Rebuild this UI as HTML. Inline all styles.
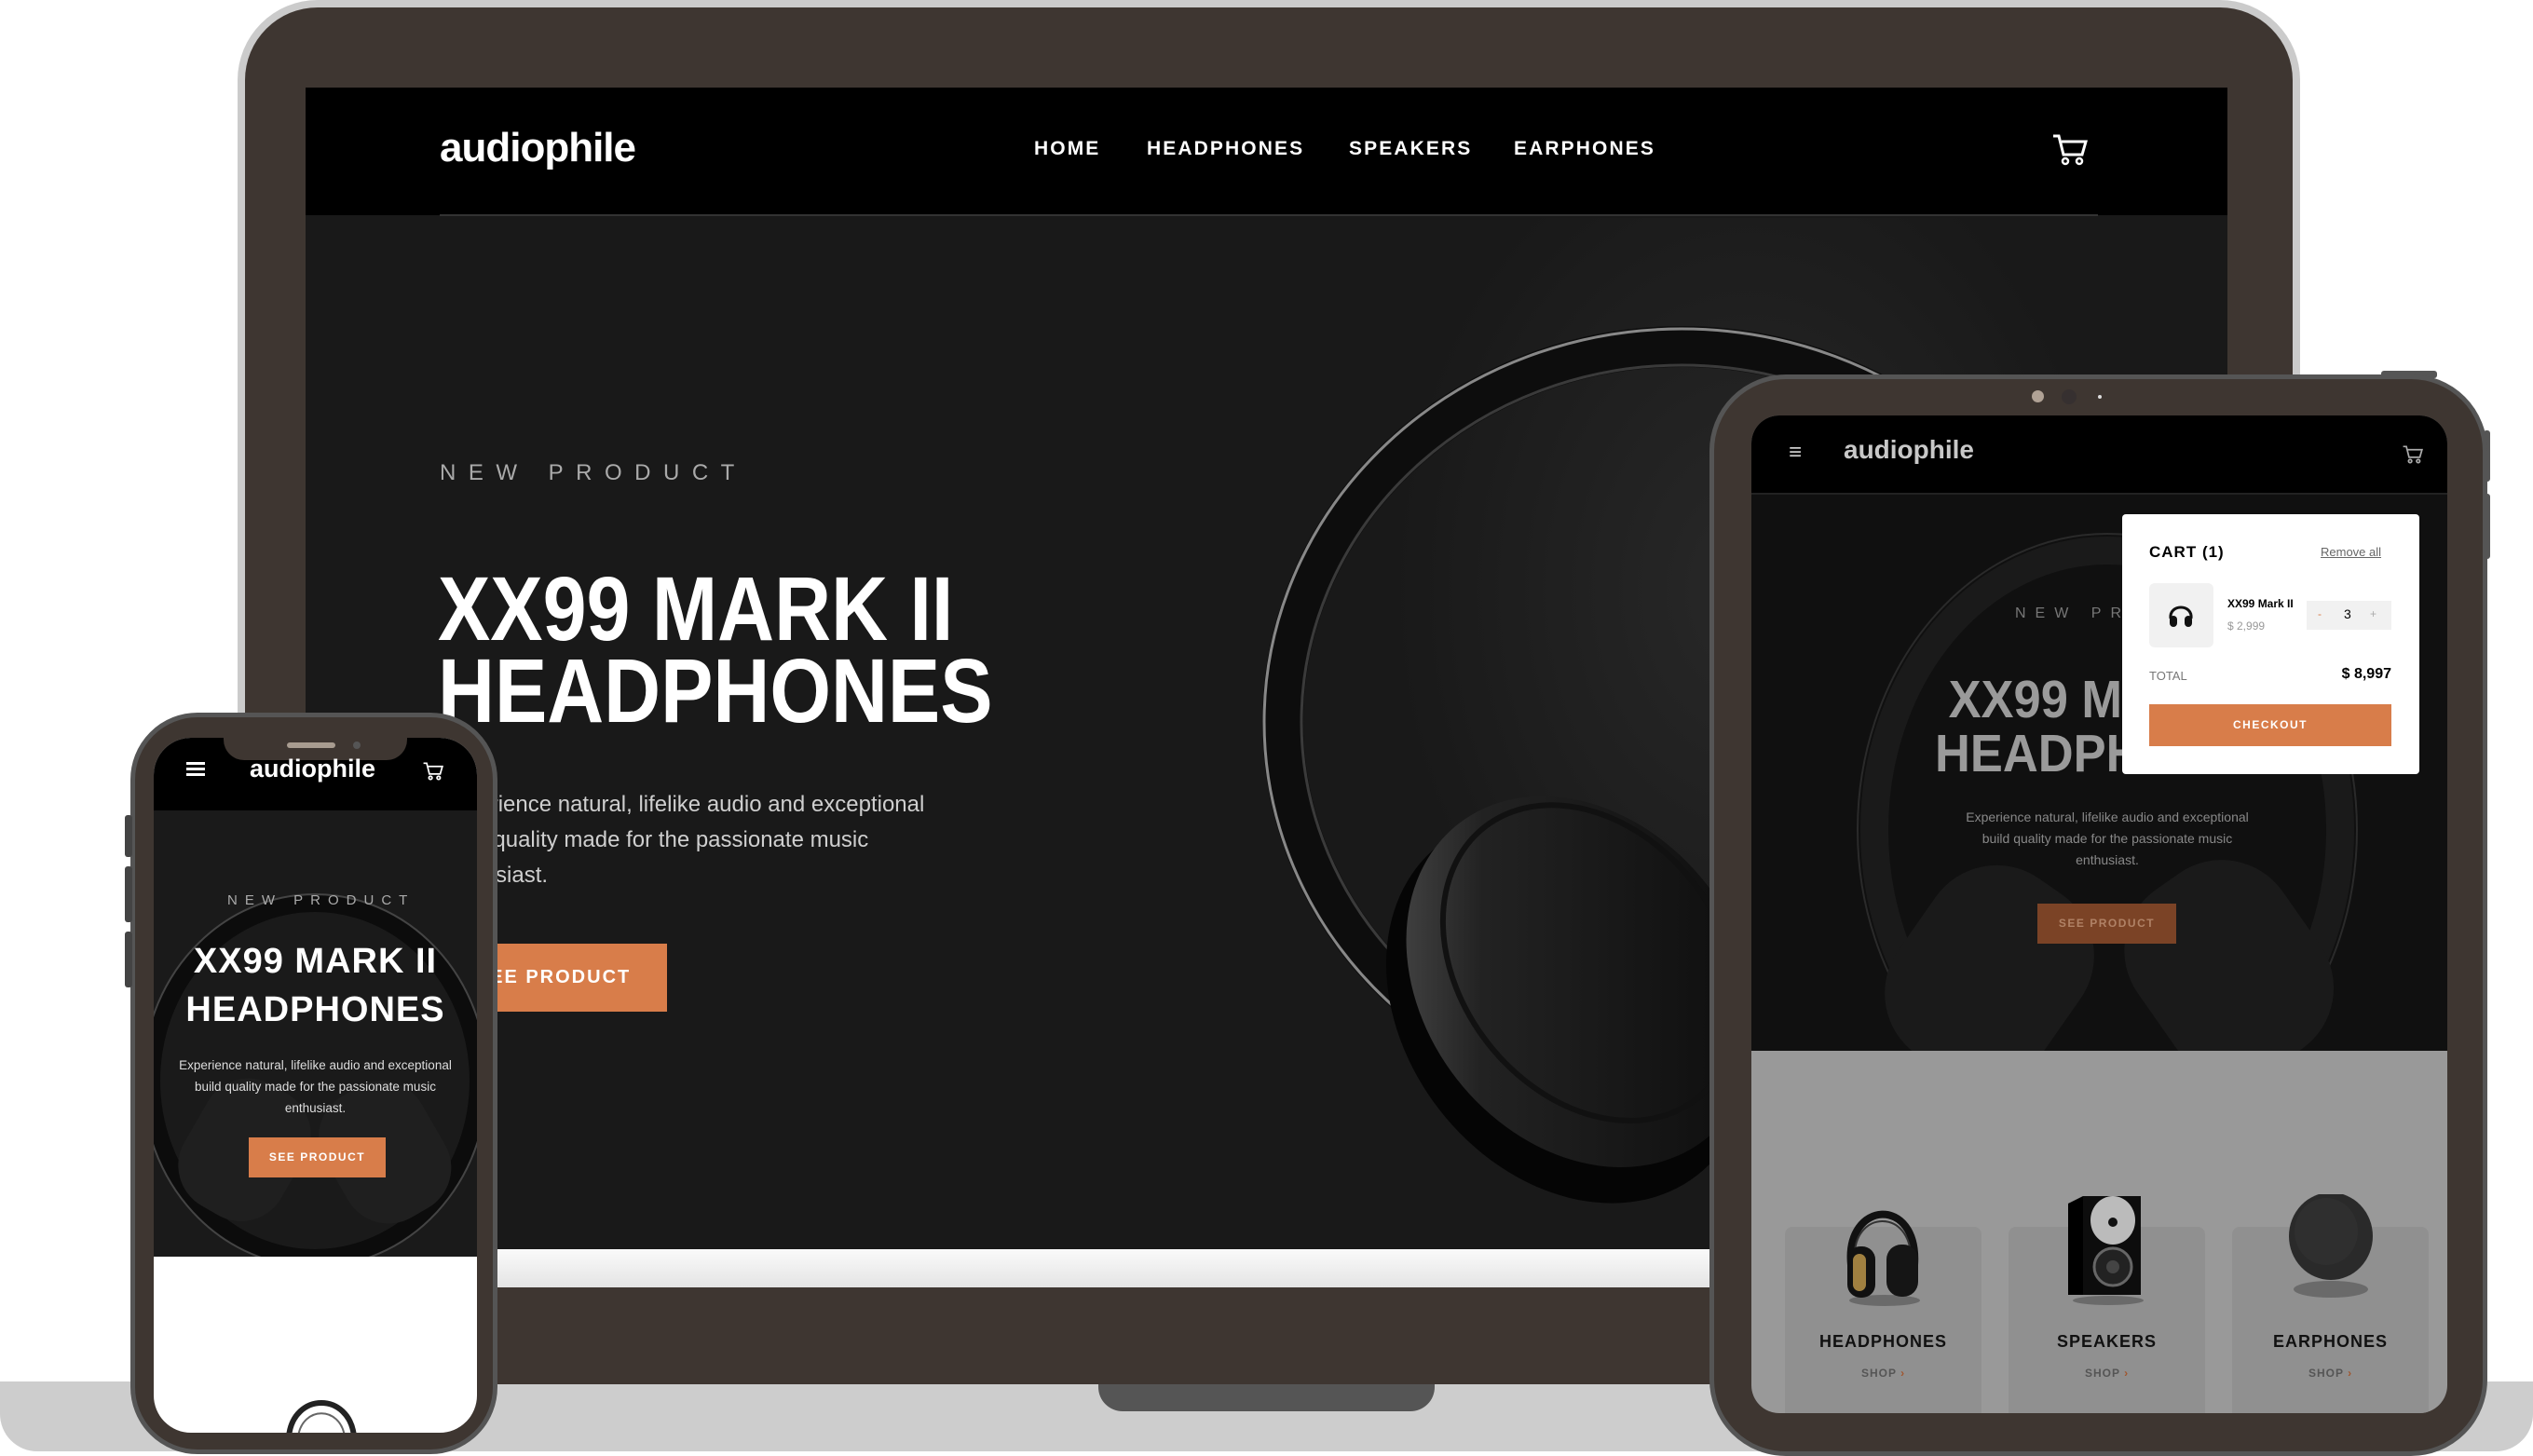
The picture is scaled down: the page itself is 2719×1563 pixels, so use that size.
<!DOCTYPE html>
<html><head><meta charset="utf-8">
<style>
*{margin:0;padding:0;box-sizing:border-box}
html,body{width:2719px;height:1563px;overflow:hidden;background:#fff;font-family:"Liberation Sans",Arial,sans-serif}
.a{position:absolute}
.t{position:absolute;white-space:nowrap}
</style></head><body>

<!-- Laptop base -->
<div class="a" style="left:0;top:1483px;width:2719px;height:75px;background:#cdcdcd;border-radius:0 0 40px 40px"></div>
<div class="a" style="left:1179px;top:1483px;width:361px;height:32px;background:#555;border-radius:0 0 26px 26px"></div>

<!-- Laptop lid -->
<div class="a" style="left:255px;top:0;width:2214px;height:1486px;background:#3e3631;border:8px solid #cbcbcb;border-bottom:none;border-radius:86px 86px 0 0"></div>
<!-- screen -->
<div class="a" style="left:328px;top:94px;width:2063px;height:1288px;background:#191919;overflow:hidden">
  <div class="a" style="left:0;top:0;width:2063px;height:137px;background:#000"></div>
  <div class="a" style="left:144px;top:136px;width:1780px;height:2px;background:#333"></div>
  <div class="a" style="left:0;top:1247px;width:2063px;height:41px;background:linear-gradient(#fafafa,#e4e4e4)"></div>
  <div class="a" style="left:1100px;top:140px;width:900px;height:1000px;background:radial-gradient(ellipse at 50% 40%,rgba(55,55,55,.5),rgba(25,25,25,0) 60%)"></div>
</div>
<div class="t" style="left:472px;top:134px;font-size:44px;font-weight:bold;color:#fff;letter-spacing:-1px">audiophile</div>
<div class="t" style="left:1110px;top:148px;font-size:21px;font-weight:bold;color:#fff;letter-spacing:2.1px">HOME</div>
<div class="t" style="left:1231px;top:148px;font-size:21px;font-weight:bold;color:#fff;letter-spacing:2.1px">HEADPHONES</div>
<div class="t" style="left:1448px;top:148px;font-size:21px;font-weight:bold;color:#fff;letter-spacing:2.1px">SPEAKERS</div>
<div class="t" style="left:1625px;top:148px;font-size:21px;font-weight:bold;color:#fff;letter-spacing:2.1px">EARPHONES</div>
<svg class="a" style="left:2203px;top:144px" width="38" height="34" viewBox="0 0 38 34"><path d="M1 2h6l5 20h20l4-14H10" fill="none" stroke="#fff" stroke-width="3"/><circle cx="14" cy="29" r="3" fill="none" stroke="#fff" stroke-width="2.5"/><circle cx="29" cy="29" r="3" fill="none" stroke="#fff" stroke-width="2.5"/></svg>

<!-- big headphone art -->
<svg class="a" style="left:0;top:0" width="2719" height="1563" viewBox="0 0 2719 1563">
<defs>
<clipPath id="ls"><rect x="328" y="231" width="2063" height="1110"/></clipPath>
<linearGradient id="cup" x1="0" y1="0" x2="1" y2="1"><stop offset="0" stop-color="#5a5a5a"/><stop offset=".3" stop-color="#222"/><stop offset="1" stop-color="#080808"/></linearGradient>
</defs>
<g clip-path="url(#ls)">
<ellipse cx="1805" cy="775" rx="428" ry="403" fill="none" stroke="#0d0d0d" stroke-width="44"/>
<ellipse cx="1805" cy="775" rx="448" ry="422" fill="none" stroke="#888" stroke-width="3"/>
<ellipse cx="1805" cy="775" rx="408" ry="383" fill="none" stroke="#3a3a3a" stroke-width="3"/>
<g transform="rotate(-38 1690 1060)">
<ellipse cx="1670" cy="1075" rx="175" ry="225" fill="#050505"/>
<ellipse cx="1700" cy="1060" rx="170" ry="215" fill="url(#cup)"/>
<ellipse cx="1720" cy="1050" rx="140" ry="185" fill="none" stroke="#111" stroke-width="6"/>
</g>
</g>
</svg>

<div class="t" style="left:472px;top:494px;font-size:24px;color:#aaa;letter-spacing:13.5px">NEW PRODUCT</div>
<div class="t" style="left:470px;top:610px;font-size:97px;font-weight:bold;color:#fff;line-height:88px;transform:scaleX(.87);transform-origin:0 0">XX99 MARK II<br>HEADPHONES</div>
<div class="t" style="left:472px;top:845px;font-size:24px;color:#cfcfcf;line-height:38px">Experience natural, lifelike audio and exceptional<br>build quality made for the passionate music<br>enthusiast.</div>
<div class="a" style="left:472px;top:1013px;width:244px;height:73px;background:#d87d4a;color:#fff;font-size:20px;font-weight:bold;letter-spacing:2px;text-align:center;line-height:73px">SEE PRODUCT</div>

<!-- Phone -->
<div class="a" style="left:140px;top:765px;width:394px;height:796px;background:#3e3631;border:5px solid #555;border-radius:72px"></div>
<div class="a" style="left:134px;top:875px;width:8px;height:45px;background:#444;border-radius:3px"></div>
<div class="a" style="left:134px;top:930px;width:8px;height:60px;background:#444;border-radius:3px"></div>
<div class="a" style="left:134px;top:1000px;width:8px;height:60px;background:#444;border-radius:3px"></div>
<div class="a" style="left:165px;top:792px;width:347px;height:746px;background:#fff;border-radius:40px;overflow:hidden">
  <div class="a" style="left:0;top:0;width:347px;height:78px;background:#000"></div>
  <div class="a" style="left:0;top:78px;width:347px;height:479px;background:#1a1a1a"></div>
  <svg class="a" style="left:0;top:78px" width="347" height="479"><ellipse cx="173" cy="290" rx="175" ry="190" fill="none" stroke="#0c0c0c" stroke-width="18"/><ellipse cx="173" cy="290" rx="185" ry="200" fill="none" stroke="#444" stroke-width="2"/>
  <g transform="rotate(30 100 360)"><rect x="40" y="290" width="120" height="150" rx="50" fill="#1f1f1f"/></g><g transform="rotate(-30 250 360)"><rect x="185" y="290" width="120" height="150" rx="50" fill="#1f1f1f"/></g></svg>
  <svg class="a" style="left:140px;top:702px" width="80" height="50"><path d="M5 48 C10 0 70 0 75 48" fill="none" stroke="#222" stroke-width="6"/><path d="M15 48 C20 15 60 15 65 48" fill="none" stroke="#666" stroke-width="2"/></svg>
</div>
<div class="a" style="left:240px;top:792px;width:197px;height:24px;background:#3e3631;border-radius:0 0 22px 22px"></div>
<div class="a" style="left:308px;top:797px;width:52px;height:6px;background:#a89c90;border-radius:3px"></div>
<div class="a" style="left:379px;top:796px;width:8px;height:8px;background:#555;border-radius:50%"></div>
<div class="a" style="left:200px;top:818px;width:20px;height:3px;background:#fff;box-shadow:0 6px 0 #fff,0 12px 0 #fff"></div>
<div class="t" style="left:268px;top:810px;font-size:27px;font-weight:bold;color:#fff">audiophile</div>
<svg class="a" style="left:454px;top:818px" width="22" height="20" viewBox="0 0 38 34"><path d="M1 2h6l5 20h20l4-14H10" fill="none" stroke="#fff" stroke-width="3"/><circle cx="14" cy="29" r="3" fill="none" stroke="#fff" stroke-width="3"/><circle cx="29" cy="29" r="3" fill="none" stroke="#fff" stroke-width="3"/></svg>
<div class="t" style="left:244px;top:958px;font-size:15px;color:#aaa;letter-spacing:8px">NEW PRODUCT</div>
<div class="t" style="left:165px;top:1006px;width:347px;text-align:center;font-size:38px;font-weight:bold;color:#fff;line-height:52px;letter-spacing:1px">XX99 MARK II<br>HEADPHONES</div>
<div class="t" style="left:165px;top:1132px;width:347px;text-align:center;font-size:13.5px;color:#ddd;line-height:23px">Experience natural, lifelike audio and exceptional<br>build quality made for the passionate music<br>enthusiast.</div>
<div class="a" style="left:267px;top:1221px;width:147px;height:43px;background:#d87d4a;color:#fff;font-size:12px;font-weight:bold;letter-spacing:1.5px;text-align:center;line-height:43px">SEE PRODUCT</div>

<!-- Tablet -->
<div class="a" style="left:2556px;top:398px;width:60px;height:8px;background:#555;border-radius:3px"></div>
<div class="a" style="left:2666px;top:462px;width:7px;height:55px;background:#555;border-radius:3px"></div>
<div class="a" style="left:2666px;top:530px;width:7px;height:70px;background:#555;border-radius:3px"></div>
<div class="a" style="left:1835px;top:402px;width:835px;height:1161px;background:#3e3631;border:5px solid #555;border-radius:82px"></div>
<div class="a" style="left:2181px;top:419px;width:13px;height:13px;background:#b0a295;border-radius:50%"></div>
<div class="a" style="left:2213px;top:418px;width:16px;height:16px;background:#363030;border-radius:50%"></div>
<div class="a" style="left:2252px;top:424px;width:4px;height:4px;background:#ddd;border-radius:50%"></div>
<div class="a" style="left:1880px;top:446px;width:747px;height:1071px;background:#999;border-radius:30px;overflow:hidden">
  <div class="a" style="left:0;top:0;width:747px;height:83px;background:#000"></div>
  <div class="a" style="left:0;top:83px;width:747px;height:2px;background:#222"></div>
  <div class="a" style="left:0;top:85px;width:747px;height:597px;background:#101010"></div>
  <svg class="a" style="left:0;top:85px" width="747" height="597"><ellipse cx="382" cy="360" rx="250" ry="300" fill="none" stroke="#1a1a1a" stroke-width="30"/><ellipse cx="382" cy="360" rx="268" ry="318" fill="none" stroke="#2a2a2a" stroke-width="2"/>
  <g transform="rotate(35 260 500)"><rect x="170" y="400" width="190" height="230" rx="80" fill="#1a1a1a"/></g><g transform="rotate(-35 500 500)"><rect x="410" y="400" width="190" height="230" rx="80" fill="#1a1a1a"/></g></svg>
  <div class="a" style="left:36px;top:871px;width:211px;height:210px;background:#909090;border-radius:8px"></div>
  <div class="a" style="left:276px;top:871px;width:211px;height:210px;background:#909090;border-radius:8px"></div>
  <div class="a" style="left:516px;top:871px;width:211px;height:210px;background:#909090;border-radius:8px"></div>
</div>
<div class="t" style="left:1920px;top:472px;font-size:24px;color:#ccc">&#8801;</div>
<div class="t" style="left:1979px;top:467px;font-size:28px;font-weight:bold;color:#c8c8c8">audiophile</div>
<svg class="a" style="left:2579px;top:478px" width="22" height="20" viewBox="0 0 38 34"><path d="M1 2h6l5 20h20l4-14H10" fill="none" stroke="#aaa" stroke-width="3"/><circle cx="14" cy="29" r="3" fill="none" stroke="#aaa" stroke-width="3"/><circle cx="29" cy="29" r="3" fill="none" stroke="#aaa" stroke-width="3"/></svg>
<div class="t" style="left:2163px;top:650px;font-size:16px;color:#777;letter-spacing:10px">NEW PRODUCT</div>
<div class="t" style="left:2077px;top:722px;font-size:57px;font-weight:bold;color:#9a9a9a;line-height:58px;transform:scaleX(.92);transform-origin:0 0">&nbsp;XX99 MARK II<br>HEADPHONES</div>
<div class="t" style="left:2062px;top:866px;width:400px;text-align:center;font-size:14px;color:#888;line-height:23px">Experience natural, lifelike audio and exceptional<br>build quality made for the passionate music<br>enthusiast.</div>
<div class="a" style="left:2187px;top:970px;width:149px;height:43px;background:#7b4326;color:#b08266;font-size:12px;font-weight:bold;letter-spacing:1.5px;text-align:center;line-height:43px">SEE PRODUCT</div>

<!-- cart popup -->
<div class="a" style="left:2278px;top:552px;width:319px;height:279px;background:#fff;border-radius:4px"></div>
<div class="t" style="left:2307px;top:583px;font-size:17px;font-weight:bold;color:#000;letter-spacing:1px">CART (1)</div>
<div class="t" style="left:2491px;top:585px;font-size:13px;color:#666;text-decoration:underline">Remove all</div>
<div class="a" style="left:2307px;top:626px;width:69px;height:69px;background:#f1f1f1;border-radius:6px"></div>
<svg class="a" style="left:2326px;top:644px" width="30" height="32" viewBox="0 0 30 32"><path d="M4 20 C2 4 28 4 26 20" fill="none" stroke="#111" stroke-width="3"/><rect x="3" y="17" width="8" height="12" rx="4" fill="#111"/><rect x="19" y="17" width="8" height="12" rx="4" fill="#111"/></svg>
<div class="t" style="left:2391px;top:641px;font-size:12px;font-weight:bold;color:#000">XX99 Mark II</div>
<div class="t" style="left:2391px;top:665px;font-size:12px;color:#999">$ 2,999</div>
<div class="a" style="left:2476px;top:645px;width:91px;height:31px;background:#f1f1f1"></div>
<div class="t" style="left:2488px;top:652px;font-size:12px;color:#d87d4a">-</div>
<div class="t" style="left:2516px;top:651px;font-size:14px;color:#000">3</div>
<div class="t" style="left:2544px;top:652px;font-size:12px;color:#aaa">+</div>
<div class="t" style="left:2307px;top:718px;font-size:13px;color:#777">TOTAL</div>
<div class="t" style="left:2487px;top:715px;width:80px;text-align:right;font-size:16px;font-weight:bold;color:#000">$ 8,997</div>
<div class="a" style="left:2307px;top:756px;width:260px;height:45px;background:#d87d4a;color:#fff;font-size:12px;font-weight:bold;letter-spacing:1.5px;text-align:center;line-height:45px">CHECKOUT</div>

<!-- tablet category images -->
<svg class="a" style="left:1975px;top:1278px" width="95" height="125" viewBox="0 0 95 125"><ellipse cx="48" cy="118" rx="38" ry="6" fill="#6a6a6a"/><path d="M12 80 C5 10 85 5 80 80" fill="none" stroke="#111" stroke-width="8"/><path d="M16 75 C12 20 78 18 76 75" fill="none" stroke="#333" stroke-width="2"/><rect x="8" y="60" width="30" height="55" rx="14" fill="#111"/><rect x="14" y="68" width="14" height="40" rx="7" fill="#a08040"/><rect x="50" y="58" width="34" height="56" rx="16" fill="#151515"/></svg>
<svg class="a" style="left:2218px;top:1282px" width="90" height="120" viewBox="0 0 90 120"><ellipse cx="45" cy="114" rx="38" ry="5" fill="#6a6a6a"/><path d="M2 10 L18 2 L18 108 L2 108Z" fill="#000"/><rect x="18" y="2" width="62" height="106" fill="#0d0d0d"/><ellipse cx="50" cy="28" rx="24" ry="26" fill="#bbb"/><circle cx="50" cy="30" r="5" fill="#111"/><circle cx="50" cy="78" r="20" fill="#222" stroke="#666" stroke-width="3"/><circle cx="50" cy="78" r="7" fill="#444"/></svg>
<svg class="a" style="left:2452px;top:1282px" width="100" height="115" viewBox="0 0 100 115"><ellipse cx="50" cy="102" rx="40" ry="9" fill="#6a6a6a"/><ellipse cx="50" cy="45" rx="45" ry="47" fill="#2a2a2a"/><ellipse cx="45" cy="40" rx="34" ry="36" fill="#333" opacity=".6"/></svg>
<div class="t" style="left:1916px;top:1430px;width:211px;text-align:center;font-size:18px;font-weight:bold;color:#111;letter-spacing:1px">HEADPHONES</div>
<div class="t" style="left:2156px;top:1430px;width:211px;text-align:center;font-size:18px;font-weight:bold;color:#111;letter-spacing:1px">SPEAKERS</div>
<div class="t" style="left:2396px;top:1430px;width:211px;text-align:center;font-size:18px;font-weight:bold;color:#111;letter-spacing:1px">EARPHONES</div>
<div class="t" style="left:1916px;top:1467px;width:211px;text-align:center;font-size:12px;font-weight:bold;color:#555;letter-spacing:1px">SHOP <span style="color:#a0562e">&#8250;</span></div>
<div class="t" style="left:2156px;top:1467px;width:211px;text-align:center;font-size:12px;font-weight:bold;color:#555;letter-spacing:1px">SHOP <span style="color:#a0562e">&#8250;</span></div>
<div class="t" style="left:2396px;top:1467px;width:211px;text-align:center;font-size:12px;font-weight:bold;color:#555;letter-spacing:1px">SHOP <span style="color:#a0562e">&#8250;</span></div>

</body></html>
